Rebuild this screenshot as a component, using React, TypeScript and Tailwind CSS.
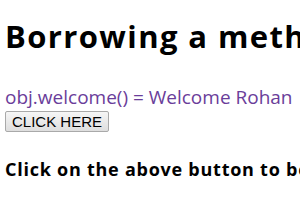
export default function App() {
  return (
    <div className="w-[300px] h-[210px] overflow-hidden bg-white px-[5px] whitespace-nowrap" style={{ fontFamily: '"Open Sans", "Noto Sans", sans-serif' }}>
      <h1 className="pt-[16px] text-[31px] font-bold leading-[40px] tracking-[1.4px] text-black">Borrowing a method</h1>
      <div className="mt-[29px] text-[19px] leading-[24px] text-[#6a3d9a]">obj.welcome() = Welcome Rohan</div>
      <button
        className="h-[21px] px-[6px] border border-[#a9a9a9] rounded-[2px] bg-gradient-to-b from-[#f6f6f6] to-[#dedede] text-[15px] leading-[19px] text-black"
        style={{ fontFamily: '"Liberation Sans", Arial, sans-serif' }}
      >
        CLICK HERE
      </button>
      <h3 className="mt-[24px] text-[18px] font-bold leading-[24px] tracking-[0.75px] text-black">Click on the above button to borrow the method</h3>
    </div>
  )
}
